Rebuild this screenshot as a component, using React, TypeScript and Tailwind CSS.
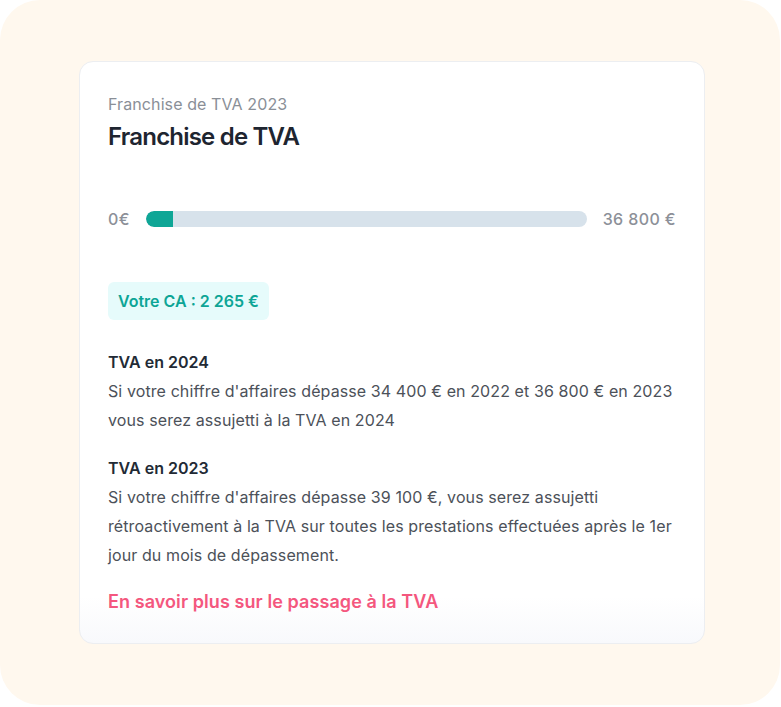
export default function App() {
  const font = { fontFamily: 'Inter, "Noto Sans", sans-serif' }
  return (
    <div className="min-h-screen bg-white" style={font}>
      <div className="h-[705px] w-[780px] rounded-[40px] bg-[#fff8ee] pl-[79px] pt-[61px]">
        <div className="flex h-[583px] w-[626px] flex-col rounded-[14px] border border-[#eceef1] bg-gradient-to-b from-white from-[92%] to-[#f8f9fc] px-[28px] pt-[30px]">
          <p className="text-[16px] leading-[24px] tracking-[0.1px] text-[#8a8f97]">Franchise de TVA 2023</p>
          <h1 className="mt-[5px] text-[24px] font-semibold leading-[32px] tracking-[-0.8px] text-[#1e2530]">
            Franchise de TVA
          </h1>

          <div className="mt-[54px] flex items-center gap-4 text-[16px] font-medium leading-[24px] tracking-[0.4px] text-[#8c9098]">
            <span>0€</span>
            <div className="h-4 flex-1 overflow-hidden rounded-full bg-[#d7e2eb]">
              <div className="h-full w-[27px] rounded-l-full bg-[#0fa696]" />
            </div>
            <span>36 800 €</span>
          </div>

          <div className="mt-[51px] flex">
            <span className="rounded-[6px] bg-[#e6fbfb] px-[10px] py-[7px] text-[16px] font-semibold leading-[24px] text-[#0da596]">
              Votre CA : 2 265 €
            </span>
          </div>

          <div className="mt-[28px] text-[16px] leading-[29px]">
            <p className="font-semibold text-[#222a35]">TVA en 2024</p>
            <p className="tracking-[0.1px] text-[#4c5159]">
              Si votre chiffre d'affaires dépasse 34 400 € en 2022 et 36 800 € en 2023 vous serez assujetti à la TVA en 2024
            </p>
          </div>

          <div className="mt-[19px] text-[16px] leading-[29px]">
            <p className="font-semibold text-[#222a35]">TVA en 2023</p>
            <p className="tracking-[0.1px] text-[#4c5159]">
              Si votre chiffre d'affaires dépasse 39 100 €, vous serez assujetti rétroactivement à la TVA sur toutes les prestations effectuées après le 1er jour du mois de dépassement.
            </p>
          </div>

          <a href="#" className="mt-[18px] text-[18px] font-semibold leading-[28px] tracking-[0.08px] text-[#f4577e]">
            En savoir plus sur le passage à la TVA
          </a>
        </div>
      </div>
    </div>
  )
}
